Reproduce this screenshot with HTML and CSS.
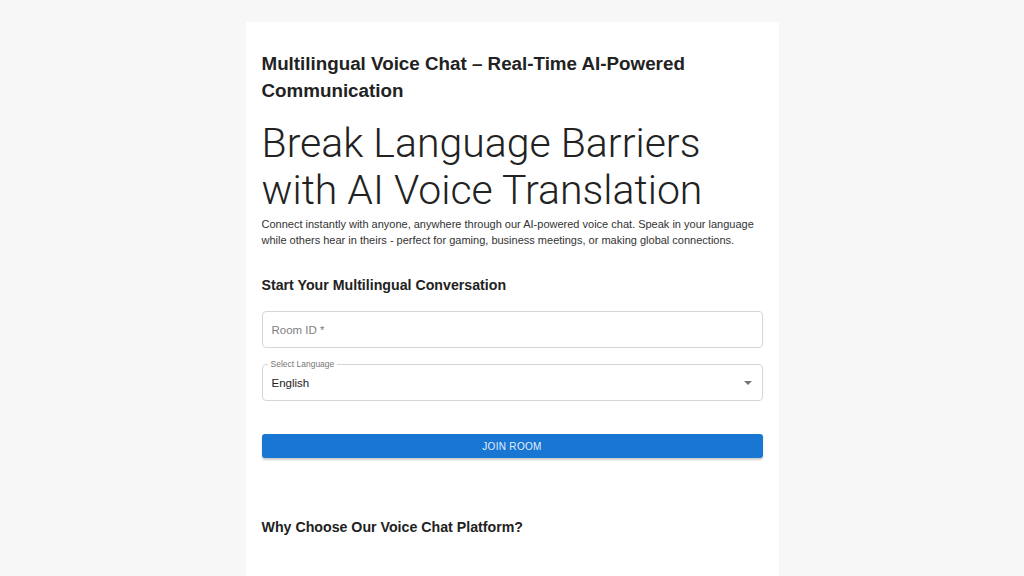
FILE: index.html
```html
<!DOCTYPE html>
<html lang="en">
<head>
  <meta charset="UTF-8" />
  <title>Multilingual Voice Chat</title>
  <link rel="stylesheet" href="styles.css">
</head>
<body>
  <div class="container">
    <h1 class="title">Multilingual Voice Chat – Real-Time AI-Powered Communication</h1>

    <h2 class="hero">Break Language Barriers with AI Voice Translation</h2>
    <p class="intro">
      Connect instantly with anyone, anywhere through our AI-powered voice chat. Speak in your language<br />
      while others hear in theirs - perfect for gaming, business meetings, or making global connections.
    </p>

    <h3 class="section-title">Start Your Multilingual Conversation</h3>

    <div class="form">
      <div class="field">
        <input type="text" id="room-id" placeholder="Room ID *" />
      </div>

      <div class="field field-select">
        <label for="language">Select Language</label>
        <div class="select-box" id="language">
          <span>English</span>
          <svg class="arrow" width="8" height="4" viewBox="0 0 10 5"><path d="M0 0 L10 0 L5 5 Z" fill="#757575"/></svg>
        </div>
      </div>

      <button class="btn" id="join-btn">Join Room</button>
    </div>

    <h3 class="section-title why">Why Choose Our Voice Chat Platform?</h3>
  </div>
</body>
</html>
```

FILE: styles.css
```css
body {
  margin: 0;
  padding: 0;
  font-family: 'Liberation Sans', Arial, sans-serif;
  background-color: #f7f7f7;
  color: #212121;
}

.container {
  width: 501px;
  margin: 22px auto 0;
  background-color: #fff;
  padding: 28px 16px 60px;
}

.title {
  margin: 0 0 16px;
  font-size: 18.8px;
  line-height: 27px;
  font-weight: 700;
  color: #222;
}

.hero {
  margin: 0 0 2px;
  font-family: Roboto, 'Liberation Sans', sans-serif;
  font-size: 41px;
  line-height: 47px;
  font-weight: 300;
  color: #222;
}

.intro {
  margin: 0;
  font-size: 11px;
  line-height: 16px;
  color: #333;
}

.section-title {
  margin: 26px 0 15px;
  font-size: 14.2px;
  line-height: 22px;
  font-weight: 700;
  color: #222;
}

.section-title.why {
  margin-top: 58px;
}

.form {
  display: flex;
  flex-direction: column;
  gap: 16px;
}

.field input {
  box-sizing: border-box;
  width: 100%;
  height: 37px;
  padding: 0 9px;
  border: 1px solid #d6d6d6;
  border-radius: 4px;
  font-family: inherit;
  font-size: 11.5px;
  color: #222;
}

.field input::placeholder {
  color: #808080;
}

.field-select {
  position: relative;
}

.field-select label {
  position: absolute;
  top: -5px;
  left: 6px;
  padding: 0 3px;
  background-color: #fff;
  font-size: 8.5px;
  line-height: 10px;
  color: #777;
}

.select-box {
  box-sizing: border-box;
  height: 37px;
  padding: 0 10px 0 9px;
  border: 1px solid #d6d6d6;
  border-radius: 4px;
  display: flex;
  align-items: center;
  justify-content: space-between;
  font-size: 11.5px;
  color: #222;
}

.btn {
  margin-top: 17px;
  height: 24px;
  background-color: #1976d2;
  color: #e3eefa;
  border: none;
  border-radius: 3px;
  font-family: inherit;
  font-size: 10px;
  text-transform: uppercase;
  letter-spacing: 0.3px;
  box-shadow: 0 2px 2px rgba(0, 0, 0, 0.2);
  cursor: pointer;
}

.btn:hover {
  background-color: #1565c0;
}
```
